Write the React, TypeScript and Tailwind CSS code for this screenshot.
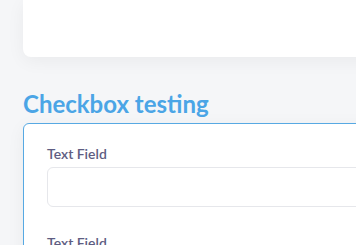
const Field = ({ label }: { label: string }) => (
  <div className="flex flex-col gap-[3px]">
    <label className="text-[14px] font-semibold leading-5 text-[#5e5d82]">{label}</label>
    <input
      type="text"
      className="h-10 w-full rounded-md border border-[#e6e7eb] bg-white px-3 text-sm outline-none"
    />
  </div>
);

const App = () => {
  return (
    <div className="h-[245px] w-[356px] overflow-hidden bg-[#f5f6f8] font-['Lato',sans-serif]">
      <div className="w-[420px] pl-[23px]">
        {/* previous section card */}
        <div className="h-[57px] rounded-b-lg bg-white shadow-[0_4px_18px_rgba(0,0,0,0.05)]" />

        <h2 className="mt-[31px] text-[24px] font-bold leading-8 text-[#4ba5e6]">Checkbox testing</h2>

        <div className="mt-[3px] flex flex-col gap-[26px] rounded-md border border-[#57a9e3] bg-white px-[23px] pt-[20px] pb-6 shadow-[0_4px_18px_rgba(0,0,0,0.05)]">
          <Field label="Text Field" />
          <Field label="Text Field" />
        </div>
      </div>
    </div>
  );
};

export default App;
